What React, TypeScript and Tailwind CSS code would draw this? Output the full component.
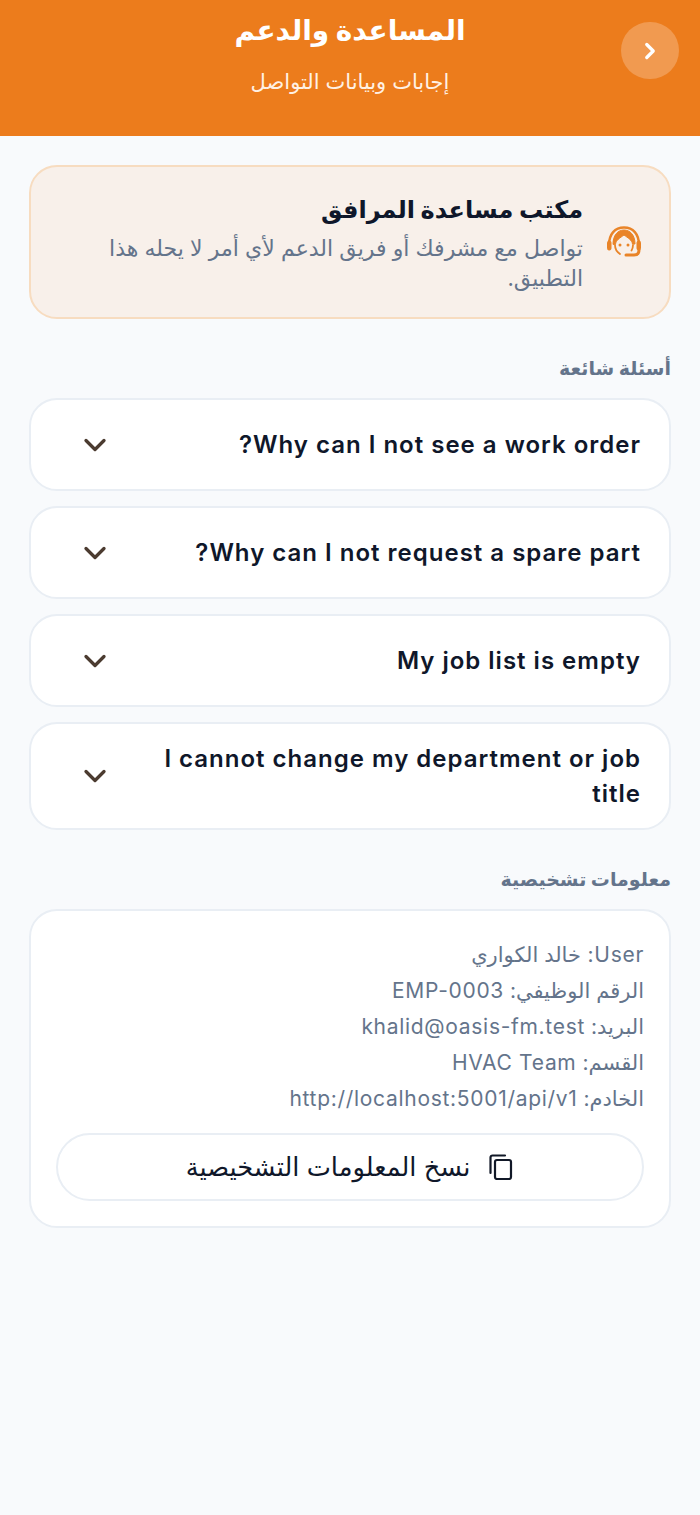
import { ChevronDown, ChevronRight } from "lucide-react";

const faqs = [
  "Why can I not see a work order?",
  "Why can I not request a spare part?",
  "My job list is empty",
  "I cannot change my department or job title",
];

const diagnostics = [
  "User: خالد الكواري",
  "الرقم الوظيفي: EMP-0003",
  "البريد: khalid@oasis-fm.test",
  "القسم: HVAC Team",
  "الخادم: http://localhost:5001/api/v1",
];

function Agent() {
  return (
    <svg width="34" height="32" viewBox="0 0 34 32" fill="none" stroke="#e98428" strokeLinecap="round" strokeLinejoin="round">
      <path d="M2 19C2 8 8 1.500 17 1.500S32 8 32 19" strokeWidth="2.400" />
      <path d="M6 18C6 9 11 4 17 4s11 5 11 14h-2.500C25 14 21 12 17 9c-4 3-8 5-8.500 9Z" fill="#e98428" strokeWidth="1" />
      <rect x="0.500" y="15" width="3.500" height="9" rx="1.500" fill="#e98428" strokeWidth="1" />
      <rect x="30" y="15" width="3.500" height="9" rx="1.500" fill="#e98428" strokeWidth="1" />
      <path d="M8 19c0 4 2 7 5 9" strokeWidth="1.800" />
      <path d="M26 19c0 2-.5 4-1.500 5.500" strokeWidth="1.800" />
      <path d="M32 24c0 3.500-2 5-5 5h-8" strokeWidth="3" />
      <circle cx="13" cy="19" r="1.500" fill="#e98428" stroke="none" />
      <circle cx="21" cy="19" r="1.500" fill="#e98428" stroke="none" />
    </svg>
  );
}

function CopyIcon() {
  return (
    <svg width="26" height="26" viewBox="0 0 26 26" fill="none" stroke="#111827" strokeWidth="2.200" strokeLinejoin="round" strokeLinecap="round">
      <path d="M2.500 19V3.500a2 2 0 0 1 2-2H17" />
      <rect x="7" y="6" width="16" height="19" rx="2" />
    </svg>
  );
}

export default function App() {
  return (
    <div dir="rtl" className="min-h-[1515px] bg-[#f8fafc] font-['Inter','Noto_Sans','DejaVu_Sans',sans-serif]">
      <header className="h-[136px] bg-[#ec7c1c] px-[21px] grid grid-cols-[58px_1fr_58px]">
        <button className="mt-[22px] w-[58px] h-[57px] rounded-full bg-[#f19a50] flex items-center justify-center text-white">
          <ChevronRight size={26} strokeWidth={3} />
        </button>
        <div className="text-center text-white">
          <h1 className="mt-[8px] text-[28px] leading-[44px] font-bold">المساعدة والدعم</h1>
          <p className="mt-[14px] text-[21px] leading-[32px] text-[#fff1e4]">إجابات وبيانات التواصل</p>
        </div>
        <div />
      </header>

      <main className="px-[29px] pt-[29px]">
        <section className="h-[154px] rounded-[28px] border-2 border-[#f7dcc0] bg-[#f8f0ea] px-[28px] flex items-center gap-[24px]">
          <div className="shrink-0"><Agent /></div>
          <div>
            <h2 className="text-[24px] leading-[38px] font-bold text-[#0f172a]">مكتب مساعدة المرافق</h2>
            <p className="mt-[4px] text-[22px] leading-[30px] text-[#64748b]">تواصل مع مشرفك أو فريق الدعم لأي أمر لا يحله هذا التطبيق.</p>
          </div>
        </section>

        <h3 className="mt-[36px] text-[19px] leading-[28px] font-bold text-[#64748b]">أسئلة شائعة</h3>
        <div className="mt-[15px] flex flex-col gap-[15px]">
          {faqs.map((q) => (
            <div key={q} className="min-h-[93px] rounded-[28px] border-2 border-[#e9eef4] bg-white pr-[28px] pl-[46px] py-[17px] flex items-center justify-between gap-[40px]">
              <span className="text-[24px] leading-[35px] font-semibold tracking-[1px] text-[#0f172a]">{q}</span>
              <ChevronDown size={36} strokeWidth={2.200} className="shrink-0 text-[#4b3b30]" />
            </div>
          ))}
        </div>

        <h3 className="mt-[36px] text-[19px] leading-[28px] font-bold text-[#64748b]">معلومات تشخيصية</h3>
        <section className="mt-[15px] rounded-[28px] border-2 border-[#e9eef4] bg-white px-[25px] pt-[26px] pb-[25px]">
          {diagnostics.map((d) => (
            <p key={d} className="text-[21px] leading-[36px] tracking-[0.7px] text-[#64748b]">{d}</p>
          ))}
          <button className="mt-[16px] w-full h-[68px] rounded-full border-2 border-[#e9eef4] flex items-center justify-center gap-[18px] text-[25.700px] text-[#0f172a]">
            <CopyIcon />
            <span>نسخ المعلومات التشخيصية</span>
          </button>
        </section>
      </main>
    </div>
  );
}
